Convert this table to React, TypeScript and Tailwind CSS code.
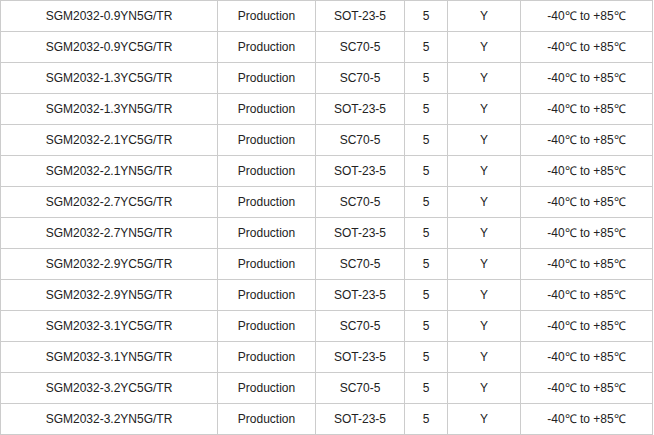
import React from "react";

const rows: [string, string, string][] = [
  ["SGM2032-0.9YN5G/TR", "SOT-23-5", ""],
  ["SGM2032-0.9YC5G/TR", "SC70-5", ""],
  ["SGM2032-1.3YC5G/TR", "SC70-5", ""],
  ["SGM2032-1.3YN5G/TR", "SOT-23-5", ""],
  ["SGM2032-2.1YC5G/TR", "SC70-5", ""],
  ["SGM2032-2.1YN5G/TR", "SOT-23-5", ""],
  ["SGM2032-2.7YC5G/TR", "SC70-5", ""],
  ["SGM2032-2.7YN5G/TR", "SOT-23-5", ""],
  ["SGM2032-2.9YC5G/TR", "SC70-5", ""],
  ["SGM2032-2.9YN5G/TR", "SOT-23-5", ""],
  ["SGM2032-3.1YC5G/TR", "SC70-5", ""],
  ["SGM2032-3.1YN5G/TR", "SOT-23-5", ""],
  ["SGM2032-3.2YC5G/TR", "SC70-5", ""],
  ["SGM2032-3.2YN5G/TR", "SOT-23-5", ""],
];

export default function App() {
  return (
    <div
      className="bg-white w-[654px] h-[435px] overflow-hidden text-[12px] text-[#222]"
      style={{ fontFamily: '"Liberation Sans", Arial, sans-serif' }}
    >
      <div className="w-[653px] border-l border-t border-[#cccccc]">
        {rows.map((r, i) => (
          <div key={i} className="flex h-[31px] border-b border-[#cccccc]">
            <div className="w-[217px] shrink-0 border-r border-[#cccccc] flex items-center justify-center">{r[0]}</div>
            <div className="w-[98px] shrink-0 border-r border-[#cccccc] flex items-center justify-center">Production</div>
            <div className="w-[89px] shrink-0 border-r border-[#cccccc] flex items-center justify-center">{r[1]}</div>
            <div className="w-[43px] shrink-0 border-r border-[#cccccc] flex items-center justify-center">5</div>
            <div className="w-[73px] shrink-0 border-r border-[#cccccc] flex items-center justify-center">Y</div>
            <div className="w-[132px] shrink-0 border-r border-[#cccccc] flex items-center justify-center">-40℃ to +85℃</div>
          </div>
        ))}
      </div>
    </div>
  );
}
